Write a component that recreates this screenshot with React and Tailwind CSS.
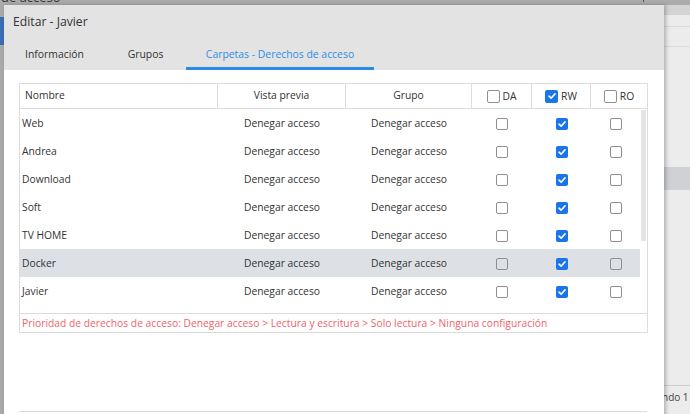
import React from "react";

const rows = [
  { name: "Web" },
  { name: "Andrea" },
  { name: "Download" },
  { name: "Soft" },
  { name: "TV HOME" },
  { name: "Docker", selected: true },
  { name: "Javier" },
];

function Box({ checked, big }) {
  const size = big ? "w-[13px] h-[13px]" : "w-[12px] h-[12px]";
  if (checked) {
    return (
      <span className={`${size} rounded-[2px] bg-[#1a74ec] flex items-center justify-center`}>
        <svg width="10" height="10" viewBox="0 0 10 10">
          <path d="M2 5.2 L4.1 7.2 L8 2.9" fill="none" stroke="#fff" strokeWidth="1.6" strokeLinecap="round" strokeLinejoin="round" />
        </svg>
      </span>
    );
  }
  return <span className={`${size} rounded-[2px] border-[1.5px] border-[#8f8f8f]`} />;
}

export default function App() {
  return (
    <div className="relative w-[690px] h-[414px] overflow-hidden bg-[#e6e6e6] font-['Open_Sans','Noto_Sans',sans-serif] text-[#333]">
      {/* fondo: la app detrás del diálogo */}
      <div className="flex flex-col h-full">
        <div className="h-[5px] bg-[#acacac] overflow-hidden flex justify-between">
          <span className="-mt-[10px] text-[13px] text-[#3a3a3a] leading-[15px] pl-[1px]">de acceso</span>
          <span className="flex gap-[8px] pr-[30px] -mt-[2px]">
            <span className="w-[6px] h-[4px] border-r border-[#555]" />
            <span className="w-[8px] h-[2px] border-b border-[#555]" />
          </span>
        </div>
        <div className="flex flex-1">
          <div className="w-[4px] bg-[#a9a9a9] flex flex-col">
            <div className="h-[12px]" />
            <div className="h-[28px] bg-[#3b6db3]" />
          </div>
          <div className="flex-1" />
          <div className="w-[26px] flex flex-col bg-[#ececec]">
            <div className="h-[10px] bg-[#d4d4d4]" />
            <div className="h-[12px] border-b border-[#dadada]" />
            <div className="h-[20px] border-b border-[#dadada]" />
            <div className="h-[120px]" />
            <div className="h-[23px] bg-[#cfd1d5]" />
            <div className="h-[196px] border-b border-[#d0d0d0]" />
            <div className="pt-[4px] text-[10px] text-[#444] -ml-[2px]">ndo 1</div>
          </div>
        </div>
      </div>

      {/* diálogo */}
      <div className="absolute left-[4px] top-[5px] w-[660px] h-[420px] bg-white shadow-[2px_0_4px_rgba(0,0,0,0.25)] flex flex-col">
        <div className="bg-[#e3e3e3] h-[65px] flex flex-col">
          <div className="h-[35px] flex items-center pl-[9px] text-[12.2px] text-[#333]">Editar - Javier</div>
          <div className="flex h-[30px] text-[10.4px]">
            <div className="w-[101px] text-center pt-[7px] border-b-[3px] border-transparent">Información</div>
            <div className="w-[81px] text-center pt-[7px] border-b-[3px] border-transparent">Grupos</div>
            <div className="w-[188px] text-center pt-[7px] border-b-[3px] border-[#2b8ae6] text-[#2f8fe6]">
              Carpetas - Derechos de acceso
            </div>
          </div>
        </div>

        <div className="pl-[15px] pt-[13px]">
          <div className="w-[629px] border border-[#dcdcdc] text-[10.3px]">
            <div className="flex h-[25px] border-b border-[#dcdcdc]">
              <div className="w-[198px] border-r border-[#dcdcdc] flex items-center pl-[5px]">Nombre</div>
              <div className="w-[128px] border-r border-[#dcdcdc] flex items-center justify-center">Vista previa</div>
              <div className="w-[126px] border-r border-[#dcdcdc] flex items-center justify-center">Grupo</div>
              <div className="w-[60px] border-r border-[#dcdcdc] flex items-center justify-center gap-[3px]">
                <Box big />
                <span className="pt-[2px]">DA</span>
              </div>
              <div className="w-[59px] border-r border-[#dcdcdc] flex items-center justify-center gap-[3px]">
                <Box big checked />
                <span className="pt-[2px]">RW</span>
              </div>
              <div className="flex-1 flex items-center justify-center gap-[3px]">
                <Box big />
                <span className="pt-[2px]">RO</span>
              </div>
            </div>

            <div className="flex h-[204px]">
              <div className="flex-1">
                {rows.map((r) => (
                  <div key={r.name} className={`flex h-[28px] items-center pt-[1px] ${r.selected ? "bg-[#dde1e6]" : ""}`}>
                    <div className="w-[198px] pl-[2px]">{r.name}</div>
                    <div className="w-[128px] text-center">Denegar acceso</div>
                    <div className="w-[126px] text-center">Denegar acceso</div>
                    <div className="w-[60px] flex justify-center"><Box /></div>
                    <div className="w-[59px] flex justify-center"><Box checked /></div>
                    <div className="flex-1 flex justify-center"><Box /></div>
                  </div>
                ))}
              </div>
              <div className="w-[7px] pl-[1px] pt-[1px] pr-[1px]">
                <div className="h-[131px] bg-[#e4e4e4]" />
              </div>
            </div>

            <div className="h-[19px] border-t border-[#dcdcdc] flex items-center pl-[2px] pt-[1px] text-[#f25f6a]">
              Prioridad de derechos de acceso: Denegar acceso &gt; Lectura y escritura &gt; Solo lectura &gt; Ninguna configuración
            </div>
          </div>
          <div className="mt-[78px] w-[628px] border-t border-[#dcdcdc]" />
        </div>
      </div>
    </div>
  );
}
